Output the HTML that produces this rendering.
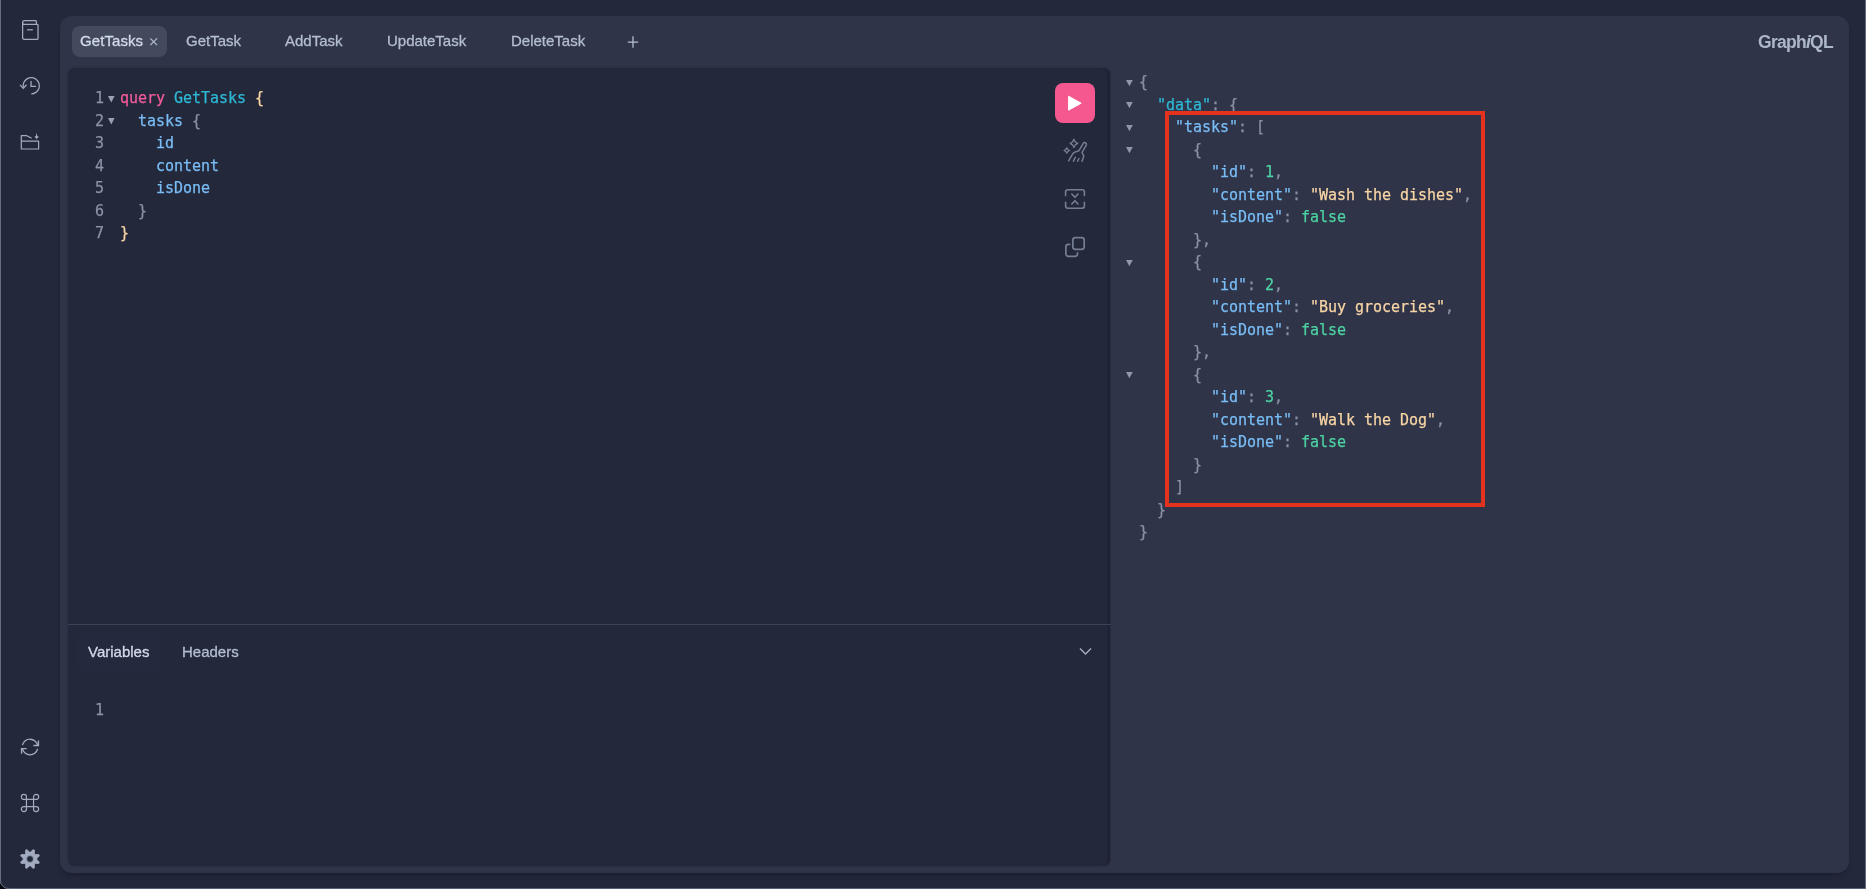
<!DOCTYPE html>
<html lang="en">
<head>
<meta charset="utf-8">
<title>GraphiQL</title>
<style>
  html, body { margin: 0; padding: 0; }
  body {
    width: 1866px; height: 889px; overflow: hidden; position: relative;
    background: #23283b;
    font-family: "Liberation Sans", sans-serif;
    font-size: 15px;
    color: #b7c2d7;
  }
  .abs { position: absolute; }
  .code, .tab, .tool, .logo { will-change: transform; }
  .frame-l { left: 0; top: 0; width: 1px; height: 889px; background: #646c80; }
  .frame-b { left: 0; top: 888px; width: 1866px; height: 1px; background: #5a6176; }
  .frame-r { left: 1865px; top: 0; width: 1px; height: 889px; background: #646c80; }

  .main { left: 60.2px; top: 16px; width: 1788.8px; height: 856.8px; border-radius: 12px; background: #2f3448; box-shadow: 0 5px 5px -3px rgba(24,28,46,0.9); }
  .editors { left: 67.6px; top: 68px; width: 1042.9px; height: 797.6px; border-radius: 7px; background: #23283b;
     box-shadow: 0 0 2px #23283b, inset -3px 0 2px -1px rgba(27,30,48,0.7); }
  .divider { left: 68px; top: 624px; width: 1043px; height: 1px; background: #3b4259; }

  .tab-active { left: 71.8px; top: 26px; width: 94.8px; height: 30.8px; border-radius: 8px; background: #444a5d; }
  .tab, .tool { -webkit-text-stroke: 0.3px currentColor; }
  .tab { top: 32px; height: 18px; line-height: 18px; font-size: 15px; color: #b4bed2; white-space: nowrap; }
  .tab.on { color: #d3dbe9; }
  .logo { left: 1758px; top: 31px; font-size: 17.5px; line-height: 22px; font-weight: bold; color: #adb7cc; white-space: nowrap; letter-spacing: -0.72px; }
  .logo em { font-style: italic; }

  .tool { font-size: 15px; line-height: 18px; height: 18px; white-space: nowrap; }
  .tool-active-bg { left: 76px; top: 634px; width: 86px; height: 36px; border-radius: 4px; background: #24293d; }

  .code { -webkit-text-stroke: 0.25px currentColor; font-family: "DejaVu Sans Mono", "Liberation Mono", monospace; font-size: 15px; line-height: 22.5px; white-space: pre; letter-spacing: -0.03px; }
  .ln { color: #8b93a7; text-align: right; width: 30px; }
  .c-kw { color: #f45c9b; }
  .c-def { color: #2db9d5; }
  .c-attr { color: #79bdf6; }
  .c-punct { color: #8a91a5; }
  .c-punct-top { color: #f8d5a5; }
  .c-prop { color: #79bdf6; }
  .c-prop-top { color: #2db9d5; }
  .c-num { color: #4dd3a3; }
  .c-str { color: #f8d5a5; }

  .run { left: 1055px; top: 83px; width: 40px; height: 40px; border-radius: 8px; background: #f4588f; }
  .redbox { left: 1164.5px; top: 110.7px; width: 320.9px; height: 396.2px; box-sizing: border-box; border: 4.7px solid #e5321f; }
  svg { display: block; overflow: visible; }
</style>
</head>
<body>
  <div class="abs main"></div>
  <div class="abs editors"></div>
  <div class="abs divider"></div>

  <!-- tabs -->
  <div class="abs tab-active"></div>
  <div class="abs tab on" style="left:80px; letter-spacing:0.08px">GetTasks</div>
  <div class="abs tab" style="left:186px">GetTask</div>
  <div class="abs tab" style="left:285px">AddTask</div>
  <div class="abs tab" style="left:387px">UpdateTask</div>
  <div class="abs tab" style="left:511px">DeleteTask</div>
  <div class="abs logo">Graph<em>i</em>QL</div>

  <!-- editor tools -->
  <div class="abs tool-active-bg"></div>
  <div class="abs tool" style="left:88px; top:643px; color:#d3dbe9">Variables</div>
  <div class="abs tool" style="left:182px; top:643px; color:#b4bed2">Headers</div>

<!-- CODE-START -->
  <!-- query editor -->
  <pre class="abs code ln" style="left:74px; top:87.1px; margin:0">1
2
3
4
5
6
7</pre>
  <pre class="abs code" style="left:120.4px; top:87.1px; margin:0"><span class="c-kw">query</span> <span class="c-def">GetTasks</span> <span class="c-punct-top">{</span>
  <span class="c-attr">tasks</span> <span class="c-punct">{</span>
    <span class="c-attr">id</span>
    <span class="c-attr">content</span>
    <span class="c-attr">isDone</span>
  <span class="c-punct">}</span>
<span class="c-punct-top">}</span></pre>
  <pre class="abs code ln" style="left:74px; top:699.1px; margin:0">1</pre>
  <!-- response -->
  <pre class="abs code" style="left:1138.7px; top:70.7px; margin:0"><span class="c-punct">{</span>
  <span class="c-prop-top">&quot;data&quot;</span><span class="c-punct">:</span> <span class="c-punct">{</span>
    <span class="c-prop">&quot;tasks&quot;</span><span class="c-punct">:</span> <span class="c-punct">[</span>
      <span class="c-punct">{</span>
        <span class="c-prop">&quot;id&quot;</span><span class="c-punct">:</span> <span class="c-num">1</span><span class="c-punct">,</span>
        <span class="c-prop">&quot;content&quot;</span><span class="c-punct">:</span> <span class="c-str">&quot;Wash the dishes&quot;</span><span class="c-punct">,</span>
        <span class="c-prop">&quot;isDone&quot;</span><span class="c-punct">:</span> <span class="c-num">false</span>
      <span class="c-punct">},</span>
      <span class="c-punct">{</span>
        <span class="c-prop">&quot;id&quot;</span><span class="c-punct">:</span> <span class="c-num">2</span><span class="c-punct">,</span>
        <span class="c-prop">&quot;content&quot;</span><span class="c-punct">:</span> <span class="c-str">&quot;Buy groceries&quot;</span><span class="c-punct">,</span>
        <span class="c-prop">&quot;isDone&quot;</span><span class="c-punct">:</span> <span class="c-num">false</span>
      <span class="c-punct">},</span>
      <span class="c-punct">{</span>
        <span class="c-prop">&quot;id&quot;</span><span class="c-punct">:</span> <span class="c-num">3</span><span class="c-punct">,</span>
        <span class="c-prop">&quot;content&quot;</span><span class="c-punct">:</span> <span class="c-str">&quot;Walk the Dog&quot;</span><span class="c-punct">,</span>
        <span class="c-prop">&quot;isDone&quot;</span><span class="c-punct">:</span> <span class="c-num">false</span>
      <span class="c-punct">}</span>
    <span class="c-punct">]</span>
  <span class="c-punct">}</span>
<span class="c-punct">}</span></pre>
  <!-- fold markers -->
  <svg class="abs" style="left:108.30px; top:95.60px" width="6.6" height="6.6" viewBox="0 0 6.6 6.6"><polygon points="0,0 6.6,0 3.3,6.6" fill="#9aa1b4"/></svg>
  <svg class="abs" style="left:108.30px; top:118.10px" width="6.6" height="6.6" viewBox="0 0 6.6 6.6"><polygon points="0,0 6.6,0 3.3,6.6" fill="#9aa1b4"/></svg>
  <svg class="abs" style="left:1126.10px; top:79.50px" width="6.8" height="6.2" viewBox="0 0 6.8 6.2"><polygon points="0,0 6.8,0 3.4,6.2" fill="#8f97aa"/></svg>
  <svg class="abs" style="left:1126.10px; top:102.00px" width="6.8" height="6.2" viewBox="0 0 6.8 6.2"><polygon points="0,0 6.8,0 3.4,6.2" fill="#8f97aa"/></svg>
  <svg class="abs" style="left:1126.10px; top:124.50px" width="6.8" height="6.2" viewBox="0 0 6.8 6.2"><polygon points="0,0 6.8,0 3.4,6.2" fill="#8f97aa"/></svg>
  <svg class="abs" style="left:1126.10px; top:147.00px" width="6.8" height="6.2" viewBox="0 0 6.8 6.2"><polygon points="0,0 6.8,0 3.4,6.2" fill="#8f97aa"/></svg>
  <svg class="abs" style="left:1126.10px; top:259.50px" width="6.8" height="6.2" viewBox="0 0 6.8 6.2"><polygon points="0,0 6.8,0 3.4,6.2" fill="#8f97aa"/></svg>
  <svg class="abs" style="left:1126.10px; top:372.00px" width="6.8" height="6.2" viewBox="0 0 6.8 6.2"><polygon points="0,0 6.8,0 3.4,6.2" fill="#8f97aa"/></svg>
<!-- CODE-END -->
  <div class="abs run"></div>
<!-- ICONS-START -->
  <svg class="abs" style="left:21.67px; top:20px" width="16.67" height="20" viewBox="0 0 20 24" fill="none" stroke="#a3abc0" stroke-width="1.5">
    <path d="M0.75 3C0.75 4.24264 1.75736 5.25 3 5.25H17.25M0.75 3C0.75 1.75736 1.75736 0.75 3 0.75H16.25C16.8023 0.75 17.25 1.19772 17.25 1.75V5.25M0.75 3V21C0.75 22.2426 1.75736 23.25 3 23.25H18.25C18.8023 23.25 19.25 22.8023 19.25 22.25V6.25C19.25 5.69771 18.8023 5.25 18.25 5.25H17.25"/>
    <line x1="13" y1="11.75" x2="6" y2="11.75"/>
  </svg>
  <svg class="abs" style="left:19.3px; top:77px" width="21" height="17.5" viewBox="0 0 24 20" fill="none" stroke="#a3abc0" stroke-width="1.45">
    <path d="M1.59375 9.52344L4.87259 12.9944L8.07872 9.41249" stroke-linecap="square"/>
    <path d="M13.75 5.25V10.75H18.75" stroke-linecap="square"/>
    <path d="M4.95427 11.9332C4.55457 10.0629 4.74441 8.11477 5.49765 6.35686C6.25089 4.59894 7.5305 3.11772 9.16034 2.11709C10.7902 1.11647 12.6901 0.645626 14.5986 0.769388C16.5071 0.893151 18.3303 1.60543 19.8172 2.80818C21.3042 4.01093 22.3818 5.64501 22.9017 7.48548C23.4216 9.32595 23.3582 11.2823 22.7203 13.0853C22.0824 14.8883 20.9013 16.4492 19.3396 17.5532C17.778 18.6572 15.9125 19.25 14 19.25"/>
  </svg>
  <svg class="abs" style="left:10px; top:122px" width="40" height="40" viewBox="0 0 40 40" fill="none" stroke="#a3abc0" stroke-width="1.2" stroke-linejoin="round">
    <path d="M21.6 16.2 16.8 13.7H11.3V27H28.6V19.2H11.3"/>
    <path d="M26.6 10.8 27.3 13.9 29 14.9 27.3 15.9 26.6 17.8 25.9 15.9 24.2 14.9 25.9 13.9Z" fill="#a3abc0" stroke="none"/>
  </svg>
  <svg class="abs" style="left:20px; top:737px" width="20" height="20" viewBox="0 0 16 16" fill="none" stroke="#a3abc0" stroke-width="1.1">
    <path d="M4.75 9.25H1.25V12.75" stroke-linecap="square"/>
    <path d="M11.25 6.75H14.75V3.25" stroke-linecap="square"/>
    <path d="M14.1036 6.65539C13.8 5.27698 13.0387 4.04193 11.9437 3.15131C10.8487 2.26069 9.48447 1.76694 8.0731 1.75043C6.66173 1.73392 5.28633 2.19563 4.17079 3.0604C3.05526 3.92516 2.26529 5.14206 1.92947 6.513"/>
    <path d="M1.89635 9.34461C2.20001 10.723 2.96131 11.9581 4.05631 12.8487C5.15131 13.7393 6.51553 14.2331 7.9269 14.2496C9.33827 14.2661 10.7137 13.8044 11.8292 12.9396C12.9447 12.0748 13.7347 10.8579 14.0705 9.487"/>
  </svg>
  <svg class="abs" style="left:20px; top:792.9px" width="20" height="20" viewBox="0 0 20 20" fill="none" stroke="#a3abc0" stroke-width="1.2">
    <path d="M6.45 6.45V3.9A2.55 2.55 0 1 0 3.9 6.45H6.45ZM6.45 6.45H13.55V13.55H6.45ZM13.55 6.45V3.9A2.55 2.55 0 1 1 16.1 6.45H13.55M6.45 13.55V16.1A2.55 2.55 0 1 1 3.9 13.55H6.45M13.55 13.55V16.1A2.55 2.55 0 1 0 16.1 13.55H13.55"/>
  </svg>
  <svg class="abs" style="left:9.6px; top:838.8px" width="40" height="40" viewBox="0 0 40 40">
    <path fill="#a3abc0" fill-rule="evenodd" stroke="#a3abc0" stroke-width="0.8" stroke-linejoin="round" d="M20.54 13.12 L23.13 10.61 L24.43 11.14 L24.48 14.75 L25.25 15.52 L28.86 15.57 L29.39 16.87 L26.88 19.46 L26.88 20.54 L29.39 23.13 L28.86 24.43 L25.25 24.48 L24.48 25.25 L24.43 28.86 L23.13 29.39 L20.54 26.88 L19.46 26.88 L16.87 29.39 L15.57 28.86 L15.52 25.25 L14.75 24.48 L11.14 24.43 L10.61 23.13 L13.12 20.54 L13.12 19.46 L10.61 16.87 L11.14 15.57 L14.75 15.52 L15.52 14.75 L15.57 11.14 L16.87 10.61 L19.46 13.12Z M16.55 20.00a3.45 3.45 0 1 0 6.9 0a3.45 3.45 0 1 0 -6.9 0Z"/>
  </svg>
  <svg class="abs" style="left:150.3px; top:38.1px" width="7.4" height="7.4" viewBox="0 0 7.4 7.4" fill="none" stroke="#b9c2d5" stroke-width="1.1"><path d="M0.3 0.3 7.1 7.1M7.1 0.3 0.3 7.1"/></svg>
  <svg class="abs" style="left:627px; top:36.3px" width="12" height="12" viewBox="0 0 12 12" fill="none" stroke="#b4bed2" stroke-width="1.3"><path d="M0.8 6.1H11.2M6 0.3V11.7"/></svg>
  <svg class="abs" style="left:1079px; top:647px" width="13" height="9" viewBox="0 0 13 9" fill="none" stroke="#a3abc0" stroke-width="1.5"><path d="M1 1.5 6.5 7 12 1.5"/></svg>
  <svg class="abs" style="left:1055px; top:83px" width="40" height="40" viewBox="0 0 40 40"><path d="M13.6 13.2V27.2L26.2 20.2Z" fill="#ffffff" stroke="#ffffff" stroke-width="1" stroke-linejoin="round"/></svg>
  <svg class="abs" style="left:1055px; top:131px" width="40" height="40" viewBox="0 0 40 40" fill="none" stroke="#767e94" stroke-width="1.5" stroke-linejoin="round" stroke-linecap="round">
    <path d="M18.9 8.3 20.3 11 22.6 12.4 20.3 13.8 18.9 16.5 17.5 13.8 15.2 12.4 17.5 11Z" stroke-width="1.4"/>
    <path d="M11.8 16.9 12.8 18.5 14.6 19.5 12.8 20.5 11.8 22.1 10.8 20.5 9.1 19.5 10.8 18.5Z" stroke-width="1.4"/>
    <path d="M13.6 29.8 18.2 22.2C19.6 20.6 21.8 20.4 23.8 19.8L28.3 12.3A1.75 1.75 0 0 1 31.4 13.8L27 21.5 28.8 25.2 27 30.2"/>
    <path d="M18.4 30.2 20.3 26.2M22.6 30.2 23.9 27.5"/>
  </svg>
  <svg class="abs" style="left:1055px; top:179px" width="40" height="40" viewBox="0 0 40 40" fill="none" stroke="#767e94" stroke-width="1.6" stroke-linecap="round" stroke-linejoin="round">
    <path d="M10.6 16.6V13A2.2 2.2 0 0 1 12.8 10.8H27.2A2.2 2.2 0 0 1 29.4 13V16.6"/>
    <path d="M10.6 23.4V27A2.2 2.2 0 0 0 12.8 29.2H27.2A2.2 2.2 0 0 0 29.4 27V23.4"/>
    <path d="M16.8 15 19.9 18.3 23 15M16.8 25 19.9 21.7 23 25"/>
  </svg>
  <svg class="abs" style="left:1055px; top:227px" width="40" height="40" viewBox="0 0 40 40" fill="none" stroke="#767e94" stroke-width="1.7" stroke-linecap="round" stroke-linejoin="round">
    <rect x="17.8" y="10.6" width="11.4" height="11.8" rx="2.6"/>
    <path d="M14.6 17.4H13.4A2.5 2.5 0 0 0 10.9 19.9V26.9A2.5 2.5 0 0 0 13.4 29.4H20A2.5 2.5 0 0 0 22.5 26.9V25.8"/>
  </svg>
<!-- ICONS-END -->
  <div class="abs redbox"></div>

  <div class="abs frame-l"></div>
  <div class="abs frame-b"></div>
  <div class="abs frame-r"></div>
  <svg class="abs" style="left:0; top:879px" width="10" height="10" viewBox="0 0 10 10"><path d="M0 1.5A8.5 8.5 0 0 0 8.5 10H0Z" fill="#05080a"/><path d="M0.5 1A8 8 0 0 0 8.5 9.5" fill="none" stroke="#646c80" stroke-width="1"/></svg>
</body>
</html>
